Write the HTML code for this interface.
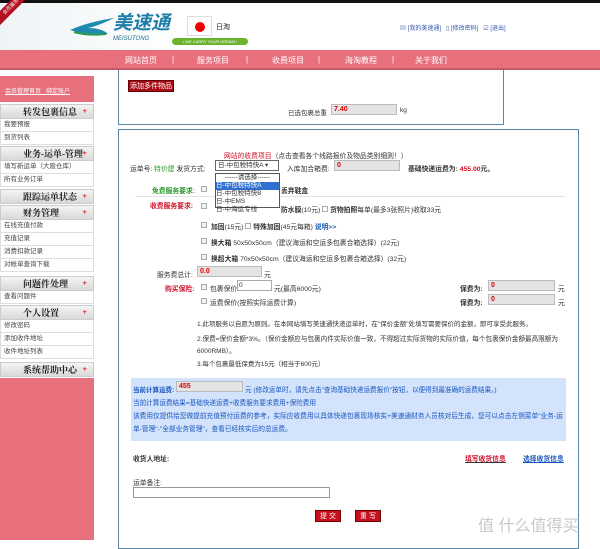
<!DOCTYPE html>
<html><head><meta charset="utf-8">
<style>
*{margin:0;padding:0;box-sizing:border-box}
body{width:600px;height:540px;overflow:hidden;background:#fff;font-family:"Liberation Sans","Noto Sans CJK SC",sans-serif;font-size:7px;color:#333;position:relative}
.a{position:absolute;white-space:nowrap}
.nav{position:absolute;left:0;top:50px;width:600px;height:20px;background:#e8707c;border-bottom:2px solid #c55a66}
.nav span{position:absolute;top:5px;color:#fff;font-size:8px}
.sh{position:absolute;left:0;width:94px;height:15px;background:linear-gradient(#f4f4f4,#d9d9d9);border:1px solid #ccc;font-family:"Liberation Serif","Noto Serif CJK SC",serif;font-weight:bold;font-size:9px;color:#222;padding-left:22px;line-height:14px}
.sh b{position:absolute;right:6px;top:0;color:#c00;font-size:8px}
.si{position:absolute;left:0;width:94px;height:13px;border:1px solid #ddd;border-top:none;font-size:6.5px;color:#444;padding-left:3px;line-height:12px;background:#fff}
.inp{position:absolute;background:#e4e4e4;border:1px solid #bbb;height:11px;color:#d00;font-size:7px;padding-left:2px;line-height:9px;font-weight:bold}
.cb{position:absolute;width:6px;height:6px;border:1px solid #aaa;background:#f3f3f3}
.red{color:#d0102a}.grn{color:#2a9a2a}.bl{color:#1a5fb4}
</style></head><body>
<div class="a" style="left:0;top:0;width:600px;height:3px;background:#111"></div>
<div class="a" style="left:0;top:3px;width:600px;height:47px;background:linear-gradient(90deg,#eef3f5,#fff 30%)"></div>
<div class="a" style="left:-14px;top:2px;width:50px;height:10px;background:#b01020;transform:rotate(-45deg);color:#fff;font-size:5px;text-align:center;line-height:10px">会员服务</div>
<svg class="a" style="left:68px;top:14px" width="48" height="24"><path d="M2 16 Q20 8 46 4 Q30 12 20 14 Q34 14 40 20 Q22 22 2 16Z" fill="#1e8ab0"/><path d="M6 18 Q20 22 38 20" stroke="#2a9a4a" stroke-width="2" fill="none"/></svg>
<div class="a" style="left:113px;top:8px;font-size:19px;color:#1e7ea8;font-style:italic;font-weight:bold">美速通</div>
<div class="a" style="left:113px;top:36px;font-size:6px;color:#1e6e90;font-style:italic">MEISUTONG</div>
<div class="a" style="left:187px;top:16px;width:25px;height:20px;background:#fff;border:1px solid #ddd"><div style="margin:5px auto;width:10px;height:10px;border-radius:50%;background:#e00"></div></div>
<div class="a" style="left:216px;top:22px;font-size:7px;color:#222">日淘</div>
<div class="a" style="left:172px;top:38px;width:76px;height:7px;background:#6bb32e;border-radius:4px;color:#fff;font-size:4px;text-align:center;line-height:7px;font-style:italic">• WE CARRY YOUR DREAM •</div>
<div class="a" style="left:400px;top:23px;font-size:6px;color:#3355aa">▤ [我的美速通] &nbsp; ▯ [修改密码] &nbsp; ☑ [退出]</div>
<div class="nav"><span style="left:125px">网站首页</span><span style="left:172px">|</span><span style="left:197px">服务项目</span><span style="left:246px">|</span><span style="left:272px">收费项目</span><span style="left:318px">|</span><span style="left:345px">海淘教程</span><span style="left:392px">|</span><span style="left:415px">关于我们</span></div>

<div class="a" style="left:0;top:76px;width:94px;height:26px;background:#e8707c"></div>
<div class="a" style="left:5px;top:86px;font-size:6px;color:#fff;text-decoration:underline">会员管理首页 &nbsp; 绑定账户</div>
<div class="sh" style="top:104px">转发包裹信息<b>+</b></div>
<div class="si" style="top:119px">我要预报</div>
<div class="si" style="top:132px">到货列表</div>
<div class="sh" style="top:146px">业务-运单-管理<b>+</b></div>
<div class="si" style="top:161px">填写新运单（大阪仓库）</div>
<div class="si" style="top:174px">所有业务订单</div>
<div class="sh" style="top:189px">跟踪运单状态<b>+</b></div>
<div class="sh" style="top:205px">财务管理<b>+</b></div>
<div class="si" style="top:220px">在线充值付款</div>
<div class="si" style="top:233px">充值记录</div>
<div class="si" style="top:246px">消费扣款记录</div>
<div class="si" style="top:259px">对帐单查询下载</div>
<div class="sh" style="top:276px">问题件处理<b>+</b></div>
<div class="si" style="top:291px">查看问题件</div>
<div class="sh" style="top:305px">个人设置<b>+</b></div>
<div class="si" style="top:320px">修改密码</div>
<div class="si" style="top:333px">添加收件地址</div>
<div class="si" style="top:346px">收件地址列表</div>
<div class="sh" style="top:362px">系统帮助中心<b>+</b></div>
<div class="a" style="left:0;top:378px;width:94px;height:162px;background:#e8707c"></div>

<div class="a" style="left:118px;top:70px;width:386px;height:55px;border:1px solid #5a86a8;border-top:none"></div>
<div class="a" style="left:128px;top:80px;width:46px;height:12px;background:#a80c16;color:#fff;font-size:7px;line-height:12px;text-align:center;border:1px solid #600">添加多件物品</div>
<div class="a" style="left:288px;top:107px;font-size:6.5px">已选包裹总重</div>
<div class="inp" style="left:331px;top:104px;width:66px">7.40</div>
<div class="a" style="left:400px;top:107px;font-size:6.5px">kg</div>

<div class="a" style="left:118px;top:129px;width:461px;height:420px;border:1px solid #5a86a8"></div>
<div class="a" style="left:224px;top:150px;font-size:6.8px"><span class="red">网站的收费项目</span>（点击查看各个线路报价及物品类别细则！）</div>
<div class="a" style="left:130px;top:163px;font-size:6.8px">运单号: <span class="grn">特价建</span> 发货方式:</div>
<div class="a" style="left:215px;top:160px;width:64px;height:11px;border:1px solid #666;background:#fff;font-size:6.5px;padding-left:2px;line-height:9px">日-中包税特快A ▾</div>
<div class="a" style="left:287px;top:163px;font-size:6.8px">入库加合箱费:</div>
<div class="inp" style="left:334px;top:160px;width:66px">0</div>
<div class="a" style="left:408px;top:163px;font-size:6.8px;font-weight:bold">基础快递运费为: <span class="red">455.00</span>元。</div>
<div class="a" style="left:152px;top:185px;font-size:6.8px"><span class="grn" style="font-weight:bold">免费服务要求:</span></div>
<div class="cb" style="left:201px;top:186px"></div>
<div class="a" style="left:281px;top:185px;font-size:6.8px;font-weight:bold">丢弃鞋盒</div>
<div class="a" style="left:135px;top:196px;width:430px;height:1px;background:#e4e4e4"></div>
<div class="a" style="left:150px;top:200px;font-size:6.8px;font-weight:bold"><span class="red">收费服务要求:</span></div>
<div class="cb" style="left:201px;top:203px"></div>
<div class="a" style="left:281px;top:204px;font-size:6.8px"><b>防水膜</b>(10元) <span style="display:inline-block;width:6px;height:6px;border:1px solid #aaa"></span> <b>货物拍照</b>每单(最多3张照片)收取33元</div>
<div class="a" style="left:215px;top:173px;width:65px;height:35px;border:1px solid #555;background:#fff;font-size:6.5px;line-height:8px">
<div style="text-align:center">------请选择------</div><div style="background:#3070d0;color:#fff">日-中包税特快A</div><div>日-中包税特快B</div><div>日-中EMS</div><div>日-中海运专线</div></div>
<div class="cb" style="left:201px;top:222px"></div>
<div class="a" style="left:211px;top:221px;font-size:6.8px"><b>加固</b>(15元) <span style="display:inline-block;width:6px;height:6px;border:1px solid #aaa"></span> <b>特殊加固</b>(45元每箱) <span class="bl" style="font-weight:bold">说明&gt;&gt;</span></div>
<div class="cb" style="left:201px;top:238px"></div>
<div class="a" style="left:211px;top:237px;font-size:6.8px"><b>换大箱</b> 50x50x50cm（建议海运和空运多包裹合箱选择）(22元)</div>
<div class="cb" style="left:201px;top:254px"></div>
<div class="a" style="left:211px;top:253px;font-size:6.8px"><b>换超大箱</b> 70x50x50cm（建议海运和空运多包裹合箱选择）(32元)</div>
<div class="a" style="left:157px;top:269px;font-size:6.8px">服务费总计:</div>
<div class="inp" style="left:197px;top:266px;width:65px">0.0</div>
<div class="a" style="left:264px;top:269px;font-size:6.8px">元</div>
<div class="a" style="left:165px;top:283px;font-size:6.8px;font-weight:bold"><span class="red">购买保险:</span></div>
<div class="cb" style="left:201px;top:284px"></div>
<div class="a" style="left:210px;top:283px;font-size:6.8px">包裹保价</div>
<div class="a" style="left:237px;top:280px;width:35px;height:11px;border:1px solid #aaa;font-size:6.5px;padding-left:1px;line-height:9px">0</div>
<div class="a" style="left:274px;top:283px;font-size:6.8px">元(最高6000元)</div>
<div class="a" style="left:460px;top:283px;font-size:6.8px;font-weight:bold">保费为:</div>
<div class="inp" style="left:488px;top:280px;width:67px">0</div>
<div class="a" style="left:558px;top:283px;font-size:6.8px">元</div>
<div class="cb" style="left:201px;top:298px"></div>
<div class="a" style="left:210px;top:297px;font-size:6.8px">运费保价(按照实际运费计算)</div>
<div class="a" style="left:460px;top:297px;font-size:6.8px;font-weight:bold">保费为:</div>
<div class="inp" style="left:488px;top:294px;width:67px">0</div>
<div class="a" style="left:558px;top:297px;font-size:6.8px">元</div>
<div class="a" style="left:197px;top:318px;font-size:6.5px">1.此项服务以自愿为原则。在本网站填写美速通快递运单时，在"保价金额"处填写需要保价的金额，即可享受此服务。</div>
<div class="a" style="left:197px;top:333px;font-size:6.6px">2.保费=保价金额*3%。（保价金额应与包裹内件实际价值一致，不得超过实际货物的实际价值，每个包裹保价金额最高限额为</div>
<div class="a" style="left:197px;top:345px;font-size:6.5px">6000RMB）。</div>
<div class="a" style="left:197px;top:358px;font-size:6.5px">3.每个包裹最低保费为15元（相当于600元）</div>

<div class="a" style="left:131px;top:378px;width:435px;height:63px;background:#d2e3fb"></div>
<div class="a" style="left:133px;top:384px;font-size:6.5px;color:#1a55c0;font-weight:bold">当前计算运费:</div>
<div class="inp" style="left:176px;top:381px;width:67px">455</div>
<div class="a" style="left:245px;top:384px;font-size:6.6px;color:#1a55c0">元 (修改运单时，请先点击"查询基础快递运费报价"按钮，以便得到最准确的运费结果。)</div>
<div class="a" style="left:133px;top:397px;font-size:6.6px;color:#1a55c0">当前计算运费结果=基础快递运费+收费服务要求费用+保险费用</div>
<div class="a" style="left:133px;top:410px;font-size:6.7px;color:#1a55c0">该费用仅提供给您做提前充值预付运费的参考，实际应收费用以具体快递包裹现场核实+美速通财务人员核对后生成，您可以点击左侧菜单"业务-运</div>
<div class="a" style="left:133px;top:423px;font-size:6.7px;color:#1a55c0">单-管理"-"全部业务管理"，查看已经核实后的总运费。</div>
<div class="a" style="left:133px;top:453px;font-size:6.8px;font-weight:bold">收货人地址:</div>
<div class="a" style="left:465px;top:453px;font-size:6.8px;font-weight:bold;text-decoration:underline"><span class="red">填写收货信息</span></div>
<div class="a" style="left:523px;top:453px;font-size:6.8px;font-weight:bold;text-decoration:underline;color:#1a55c0">选择收货信息</div>
<div class="a" style="left:133px;top:477px;font-size:6.8px">运单备注:</div>
<div class="a" style="left:133px;top:487px;width:197px;height:11px;border:1px solid #999"></div>
<div class="a" style="left:315px;top:510px;width:26px;height:12px;background:#c4101c;color:#fff;font-size:7px;text-align:center;line-height:12px;border:1px solid #700">提 交</div>
<div class="a" style="left:355px;top:510px;width:26px;height:12px;background:#c4101c;color:#fff;font-size:7px;text-align:center;line-height:12px;border:1px solid #700">重 写</div>
<div class="a" style="left:478px;top:512px;font-size:16px;color:#c8c8c8">值 什么值得买</div>
</body></html>
